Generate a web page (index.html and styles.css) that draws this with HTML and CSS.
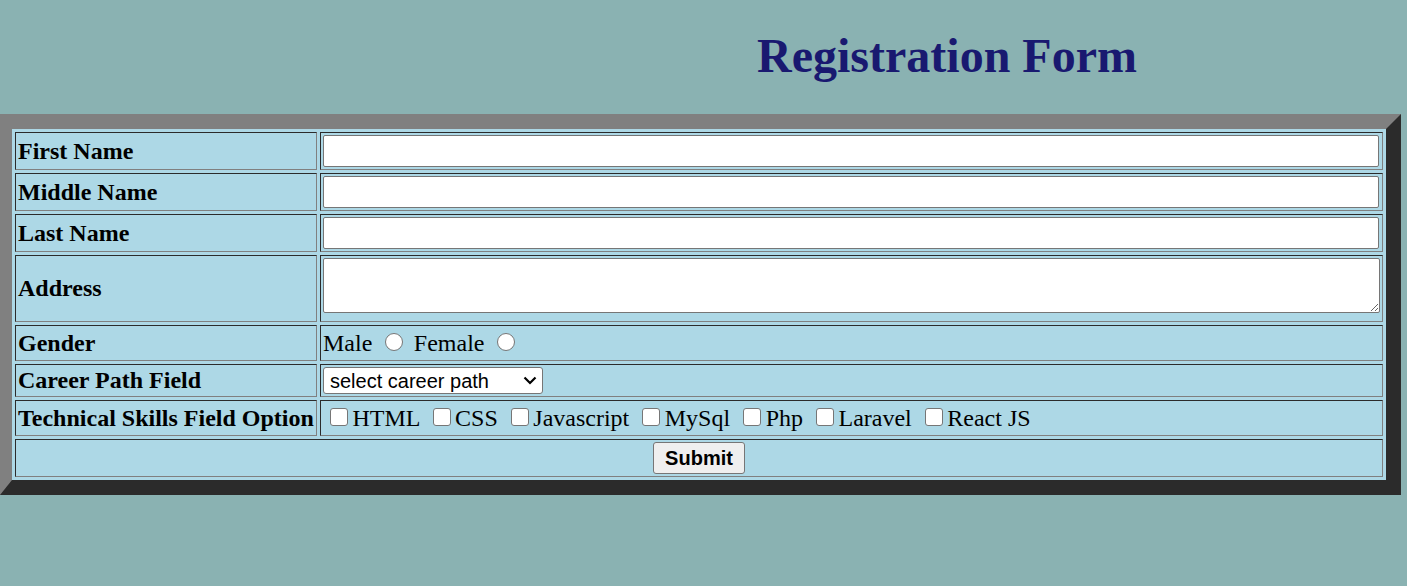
FILE: index.html
```html
<!DOCTYPE html>
<html lang="en">
<head>
<meta charset="utf-8">
<title>Registration Form</title>
<link rel="stylesheet" href="styles.css">
</head>
<body>
<h1 class="title">Registration Form</h1>
<form class="reg-form">
<table class="reg-table">
  <tr class="row-input">
    <th class="label">First Name</th>
    <td class="field"><input class="text-input" type="text"></td>
  </tr>
  <tr class="row-input">
    <th class="label">Middle Name</th>
    <td class="field"><input class="text-input" type="text"></td>
  </tr>
  <tr class="row-input">
    <th class="label">Last Name</th>
    <td class="field"><input class="text-input" type="text"></td>
  </tr>
  <tr class="row-address">
    <th class="label">Address</th>
    <td class="field"><textarea class="address-input"></textarea></td>
  </tr>
  <tr class="row-gender">
    <th class="label">Gender</th>
    <td class="field">Male <input class="radio" type="radio" name="gender"> Female <input class="radio" type="radio" name="gender"></td>
  </tr>
  <tr class="row-career">
    <th class="label">Career Path Field</th>
    <td class="field">
      <span class="select-wrap">
        <select class="career-select">
          <option>select career path</option>
          <option>Frontend</option>
          <option>Backend</option>
        </select>
        <svg class="select-arrow" width="14" height="9" viewBox="0 0 14 9"><path d="M1.5 1.5 L7 7 L12.5 1.5" fill="none" stroke="#000" stroke-width="2.2"/></svg>
      </span>
    </td>
  </tr>
  <tr class="row-skills">
    <th class="label">Technical Skills Field Option</th>
    <td class="field"><input class="check" type="checkbox">HTML <input class="check" type="checkbox">CSS <input class="check" type="checkbox">Javascript <input class="check" type="checkbox">MySql <input class="check" type="checkbox">Php <input class="check" type="checkbox">Laravel <input class="check" type="checkbox">React JS</td>
  </tr>
  <tr class="row-submit">
    <td class="submit-cell" colspan="2"><button class="submit-btn" type="submit">Submit</button></td>
  </tr>
</table>
</form>
</body>
</html>
```

FILE: styles.css
```css
html, body {
  margin: 0;
  padding: 0;
}

body {
  background: #8ab2b2;
  font-family: "Liberation Serif", "Times New Roman", serif;
  font-size: 24px;
  color: #000;
}

.title {
  margin: 28px 0 31px;
  padding-left: 487px;
  text-align: center;
  font-size: 48px;
  font-weight: bold;
  line-height: 55px;
  color: #191970;
}

.reg-form {
  margin: 0;
}

.reg-table {
  box-sizing: border-box;
  width: 1401px;
  border-collapse: separate;
  border-spacing: 3px;
  background: #add8e6;
  border-style: solid;
  border-width: 15px 15px 15px 12px;
  border-color: #808080 #2b2b2b #2b2b2b #808080;
}

.reg-table th,
.reg-table td {
  background: #add8e6;
  border: 1px solid;
  border-color: #2b2b2b #808080 #808080 #2b2b2b;
  padding: 2px;
  vertical-align: middle;
}

.label {
  width: 296px;
  text-align: left;
  font-weight: bold;
  font-size: 24px;
  white-space: nowrap;
}

.row-input td,
.row-input th {
  height: 32px;
}

.row-address th,
.row-address td {
  height: 61px;
}

.row-gender th,
.row-gender td {
  height: 30px;
}

.row-career th,
.row-career td {
  height: 27px;
}

.row-skills th,
.row-skills td {
  height: 30px;
}

.row-submit td {
  height: 32px;
}

.text-input {
  display: block;
  box-sizing: border-box;
  width: calc(100% - 1px);
  height: 32px;
  margin: 0;
  border: 1px solid #767676;
  border-radius: 2px;
  background: #fff;
  font-size: 20px;
}

.address-input {
  display: block;
  box-sizing: border-box;
  width: 100%;
  height: 55px;
  margin: 0 0 6px;
  border: 1px solid #767676;
  border-radius: 2px;
  background: #fff;
  font-size: 20px;
}

.field {
  white-space: nowrap;
  line-height: 27px;
}

.radio,
.check {
  appearance: none;
  -webkit-appearance: none;
  box-sizing: border-box;
  display: inline-block;
  width: 18px;
  height: 18px;
  margin: 4px 4.5px 0 7px;
  vertical-align: baseline;
  background: #fff;
  border: 1px solid #767676;
}

.radio {
  border-radius: 50%;
}

.check {
  border-radius: 3px;
}

.select-wrap {
  position: relative;
  display: block;
  width: 220px;
}

.career-select {
  appearance: none;
  -webkit-appearance: none;
  display: block;
  box-sizing: border-box;
  width: 220px;
  height: 27px;
  margin: 0;
  font-family: "Liberation Sans", Arial, sans-serif;
  font-size: 20px;
  border: 1px solid #767676;
  border-radius: 3px;
  background: #fff;
  color: #000;
  padding: 0 0 0 6px;
}

.select-arrow {
  position: absolute;
  right: 6px;
  top: 9px;
  pointer-events: none;
}

.submit-cell {
  text-align: center;
}

.submit-btn {
  box-sizing: border-box;
  width: 92px;
  height: 32px;
  padding: 0 8px;
  font-family: "Liberation Sans", Arial, sans-serif;
  font-size: 20px;
  font-weight: bold;
  color: #000;
  background: #efefef;
  border: 1px solid #767676;
  border-radius: 3px;
  vertical-align: middle;
}
```
